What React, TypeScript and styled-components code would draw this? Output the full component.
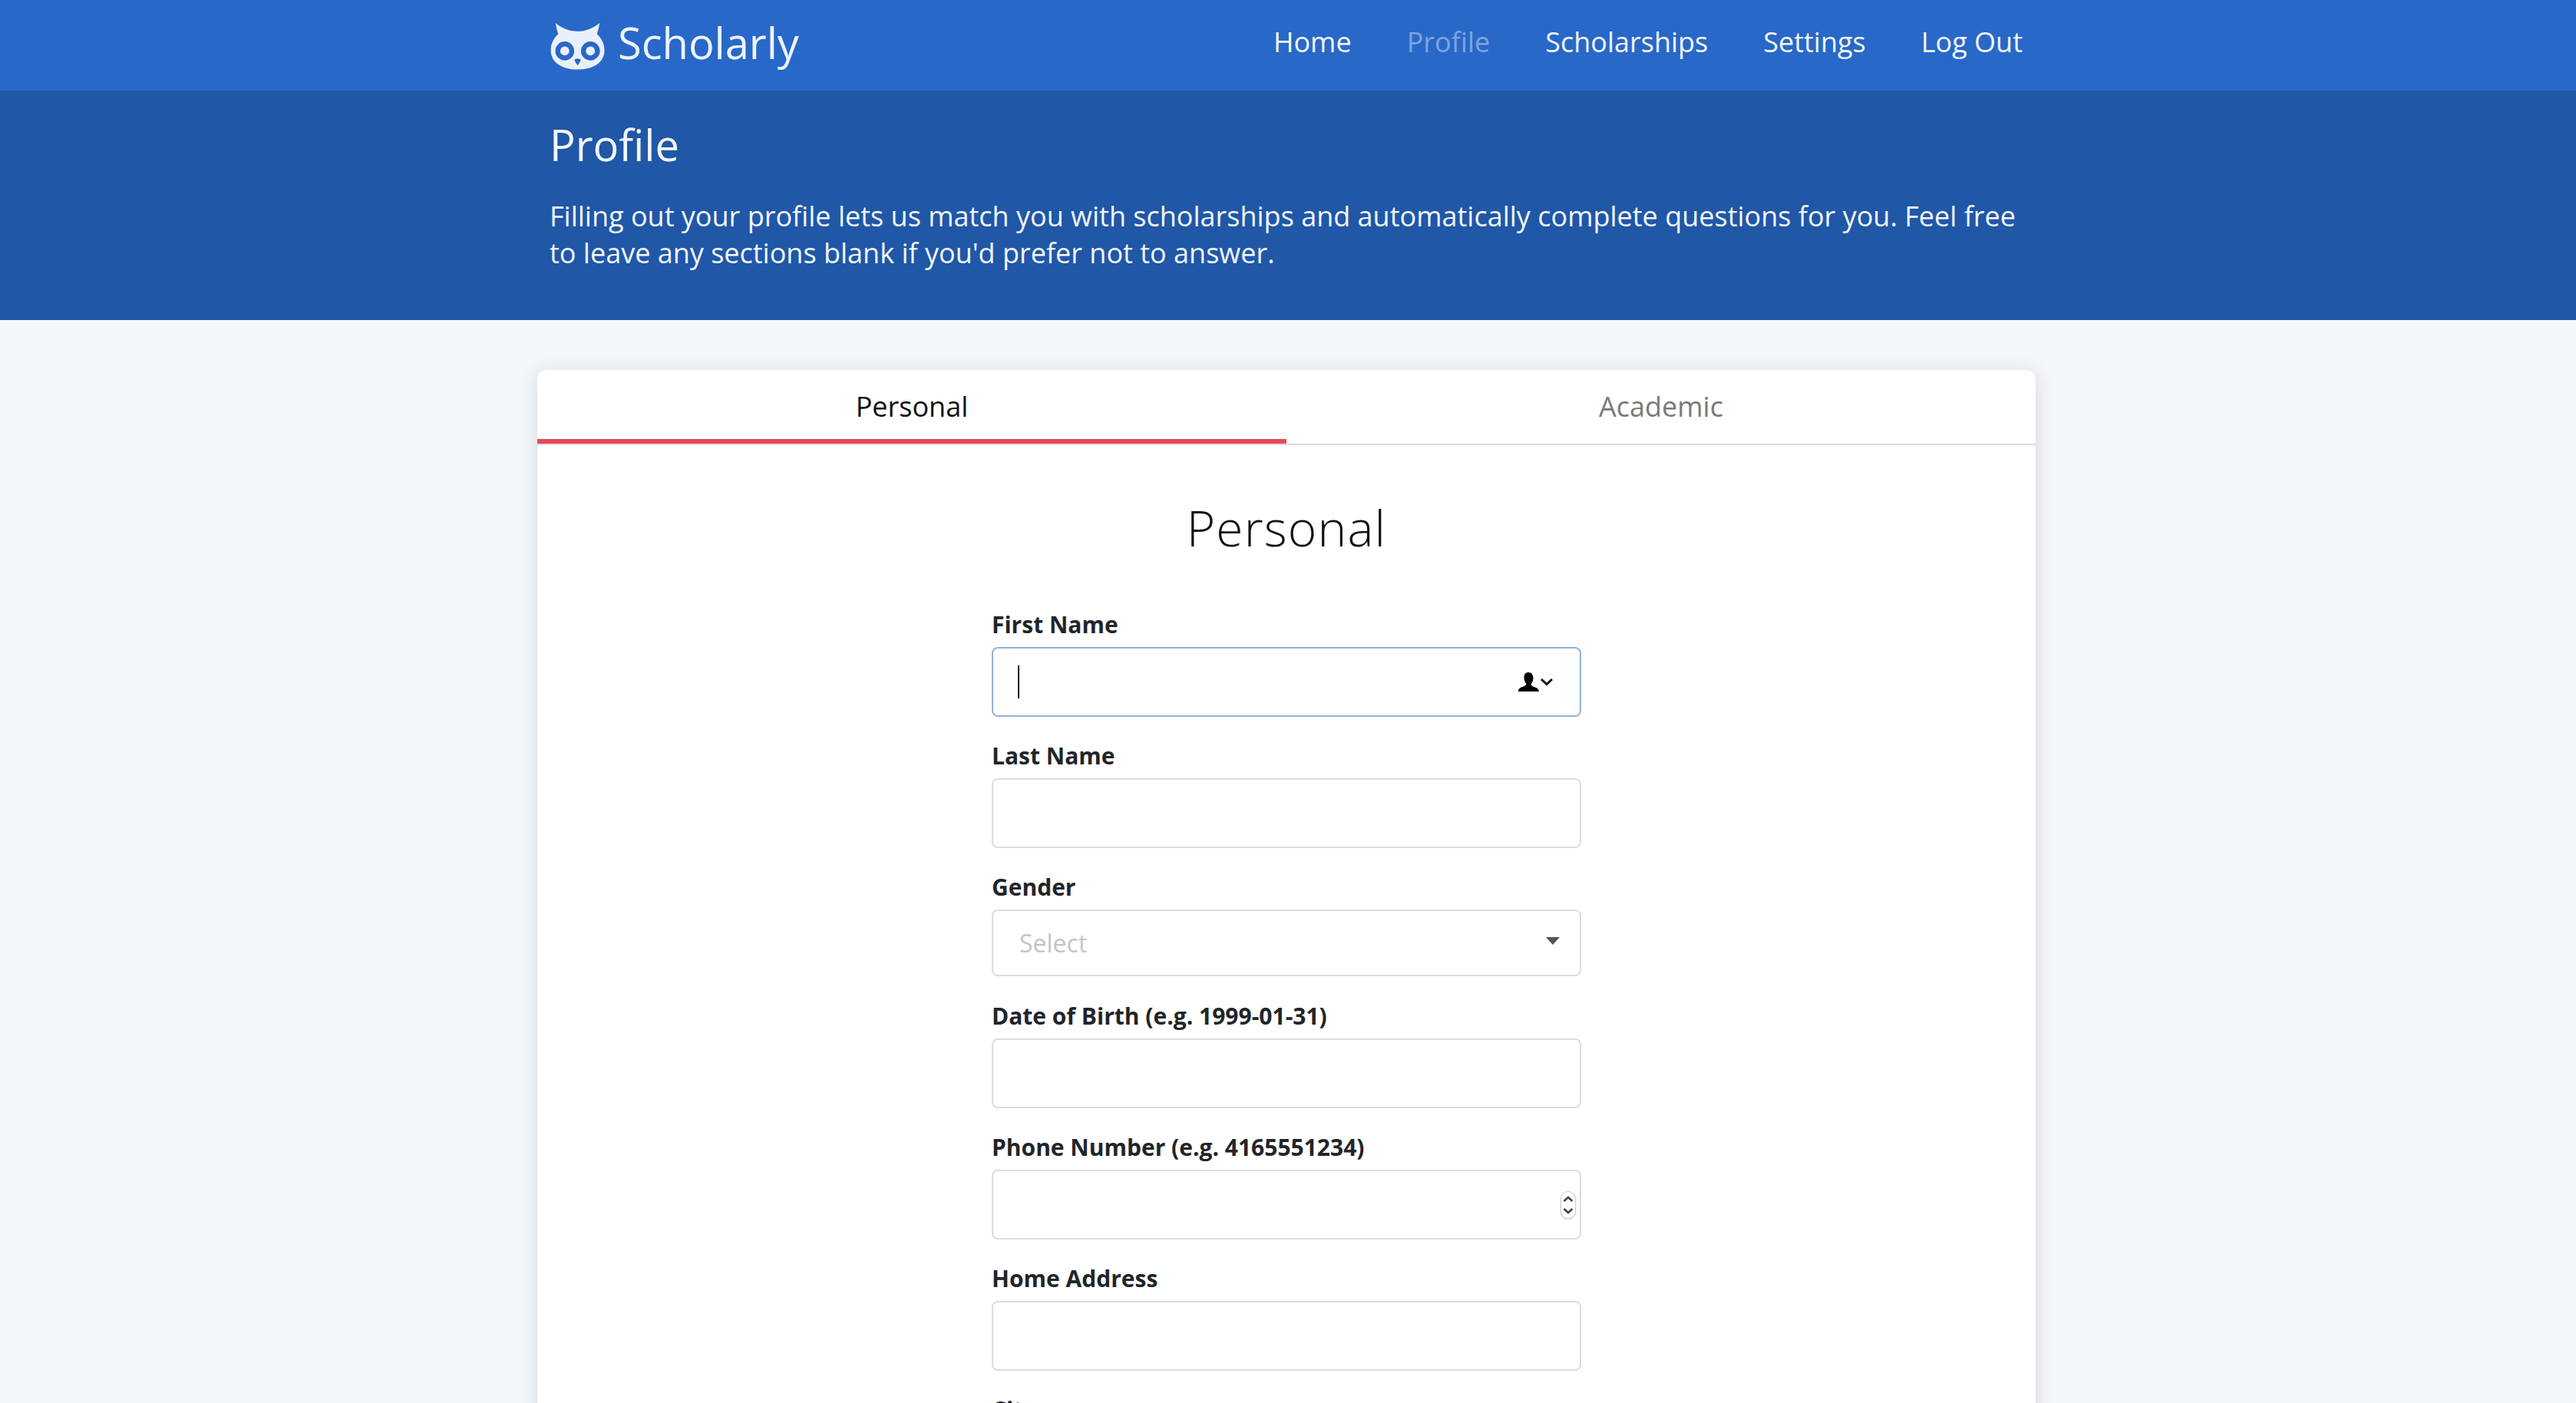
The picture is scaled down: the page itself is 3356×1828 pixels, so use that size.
import React from "react";
import styled, { createGlobalStyle } from "styled-components";

const Global = createGlobalStyle`
  html, body { margin: 0; padding: 0; height: 100%; overflow: hidden; background: #f4f7f9; }
  body { font-family: "Open Sans", "Liberation Sans", sans-serif; color: #212529; }
  #root { height: 100%; overflow: hidden; }
  * { box-sizing: border-box; }
`;

const Nav = styled.header`
  height: 118px;
  background: #2868c8;
`;
const Wrap = styled.div`
  width: 1952px;
  margin: 0 auto;
  padding: 0 16px;
  position: relative;
  left: -2px;
`;
const NavInner = styled(Wrap)`
  height: 100%;
  display: flex;
  align-items: center;
  justify-content: space-between;
  padding-bottom: 8px;
`;
const Brand = styled.div`
  display: flex;
  align-items: center;
  gap: 17px;
  color: #eef3fb;
  font-size: 56px;
  line-height: 1;
`;
const OwlMark = styled.svg`
  margin: 11px 0 0 1px;
`;
const Links = styled.nav`
  display: flex;
  gap: 72px;
  margin-right: 1px;
`;
const NavLink = styled.a<{ $muted?: boolean }>`
  font-size: 36px;
  line-height: 48px;
  color: ${(p) => (p.$muted ? "#7fa3e0" : "#f2f6fc")};
`;
const Hero = styled.section`
  height: 299px;
  background: #2057a7;
  color: #f2f6fc;
`;
const HeroInner = styled(Wrap)`
  padding-top: 36px;
`;
const HeroTitle = styled.h1`
  margin: 0 0 36px;
  font-size: 56px;
  line-height: 68px;
  font-weight: 400;
`;
const HeroText = styled.p`
  margin: 0;
  font-size: 36px;
  line-height: 48px;
`;
const Card = styled.main`
  width: 1952px;
  margin: 65px auto 0;
  position: relative;
  left: -2px;
  background: #fff;
  border-radius: 12px 12px 0 0;
  box-shadow: 0 4px 24px rgba(40, 60, 90, 0.16);
  padding-bottom: 200px;
`;
const Tabs = styled.div`
  display: flex;
  height: 98px;
  border-bottom: 2px solid #dcdcdc;
`;
const Tab = styled.div<{ $active?: boolean }>`
  flex: 1;
  height: 96px;
  display: flex;
  align-items: center;
  justify-content: center;
  padding-top: 4px;
  font-size: 36px;
  color: ${(p) => (p.$active ? "#111" : "#7a7a7a")};
  border-bottom: 6px solid ${(p) => (p.$active ? "#e24a5c" : "transparent")};
`;
const Title = styled.h2`
  margin: 64px 0 62px;
  text-align: center;
  font-size: 64px;
  line-height: 88px;
  font-weight: 300;
  letter-spacing: 1.2px;
  color: #111;
`;
const Form = styled.form`
  width: 768px;
  margin: 0 auto;
`;
const Label = styled.label`
  display: block;
  font-size: 30px;
  font-weight: 700;
  line-height: 40px;
  margin-bottom: 9px;
  color: #212529;
`;
const Group = styled.div<{ $short?: boolean }>`
  margin-bottom: ${(p) => (p.$short ? 32 : 31)}px;
`;
const Field = styled.div<{ $focus?: boolean; $short?: boolean }>`
  height: ${(p) => (p.$short ? 87 : 91)}px;
  border: 2px solid ${(p) => (p.$focus ? "#8fb3d9" : "#dddddd")};
  border-radius: 8px;
  background: #fff;
  display: flex;
  align-items: center;
  justify-content: space-between;
  padding: 0 32px;
`;
const Caret = styled.span`
  display: block;
  width: 2px;
  height: 43px;
  background: #111;
`;
const Placeholder = styled.span`
  font-size: 32px;
  margin-left: 2px;
  color: #c4c4c4;
`;
const AutofillIcon = styled.svg`
  width: 46px;
  height: 26px;
  margin-right: 2px;
`;
const Arrow = styled.svg`
  width: 18px;
  height: 12px;
  margin: -6px -6px 0 0;
`;
const Spinner = styled.svg`
  width: 20px;
  height: 36px;
  margin-right: -27px;
  filter: drop-shadow(0 1px 1px rgba(0, 0, 0, 0.15));
`;

const Owl = () => (
  <OwlMark width="71" height="61" viewBox="0 0 72 62" fill="none">
    <path
      d="M7 0c7 6 17 11 29 11S58 6 65 0c-.6 5-1.500 10-3.500 14.500C67.500 20 71.500 27 71.500 36c0 17-16 25.500-35.500 25.500S.5 53 .5 36C.5 27 4.500 20 10.500 14.500 8.500 10 7.500 5 7 0z"
      fill="#eaf0fb"
    />
    <circle cx="19" cy="37" r="12.500" fill="#2868c8" />
    <circle cx="53" cy="37" r="12.500" fill="#2868c8" />
    <circle cx="19" cy="37" r="6" fill="#eaf0fb" />
    <circle cx="53" cy="37" r="6" fill="#eaf0fb" />
    <path d="M32 48c1.500-1 6.500-1 8 0 0 3-2.500 6-4 8-1.500-2-4-5-4-8z" fill="#2868c8" />
  </OwlMark>
);

const fields: { label: string; kind?: string }[] = [
  { label: "First Name", kind: "focus" },
  { label: "Last Name" },
  { label: "Gender", kind: "select" },
  { label: "Date of Birth (e.g. 1999-01-31)" },
  { label: "Phone Number (e.g. 4165551234)", kind: "number" },
  { label: "Home Address" },
];

export default function App() {
  return (
    <>
      <Global />
      <Nav>
        <NavInner>
          <Brand>
            <Owl />
            <span>Scholarly</span>
          </Brand>
          <Links>
            <NavLink>Home</NavLink>
            <NavLink $muted>Profile</NavLink>
            <NavLink>Scholarships</NavLink>
            <NavLink>Settings</NavLink>
            <NavLink>Log Out</NavLink>
          </Links>
        </NavInner>
      </Nav>
      <Hero>
        <HeroInner>
          <HeroTitle>Profile</HeroTitle>
          <HeroText>
            Filling out your profile lets us match you with scholarships and automatically complete questions for you. Feel free to leave any sections blank if you'd prefer not to answer.
          </HeroText>
        </HeroInner>
      </Hero>
      <Card>
        <Tabs>
          <Tab $active>Personal</Tab>
          <Tab>Academic</Tab>
        </Tabs>
        <Title>Personal</Title>
        <Form>
          {fields.map((f) => (
            <Group key={f.label} $short={f.kind === "select"}>
              <Label>{f.label}</Label>
              <Field $focus={f.kind === "focus"} $short={f.kind === "select"}>
                {f.kind === "focus" && <Caret />}
                {f.kind === "select" && <Placeholder>Select</Placeholder>}
                {!f.kind && <span />}
                {f.kind === "number" && <span />}
                {f.kind === "focus" && (
                  <AutofillIcon viewBox="0 0 46 26">
                    <path
                      d="M13 0c4 0 6.500 3 6.500 7.500 0 3.500-1.500 6.500-3 8 .5 1.500 1.500 2.500 4 3.500 3 1 5.500 2 6.500 5.500V25H0v-1c1-3.500 3.500-4.500 6.500-5.500 2.500-1 3.500-2 4-3.500-1.500-1.500-3-4.500-3-8C7.500 3 9 0 13 0z"
                      fill="#000"
                    />
                    <path d="M30 9l7 6.500L44 9" fill="none" stroke="#111" strokeWidth="3" />
                  </AutofillIcon>
                )}
                {f.kind === "select" && (
                  <Arrow viewBox="0 0 18 12">
                    <path d="M0 1h18L9 11z" fill="#555" />
                  </Arrow>
                )}
                {f.kind === "number" && (
                  <Spinner viewBox="0 0 20 36">
                    <rect x=".5" y=".5" width="19" height="35" rx="9" fill="#fff" stroke="#ccc" />
                    <path d="M4.500 13l5.500-5 5.500 5M4.500 23l5.500 5 5.500-5" fill="none" stroke="#444" strokeWidth="2.600" />
                  </Spinner>
                )}
              </Field>
            </Group>
          ))}
          <Label>City</Label>
        </Form>
      </Card>
    </>
  );
}
